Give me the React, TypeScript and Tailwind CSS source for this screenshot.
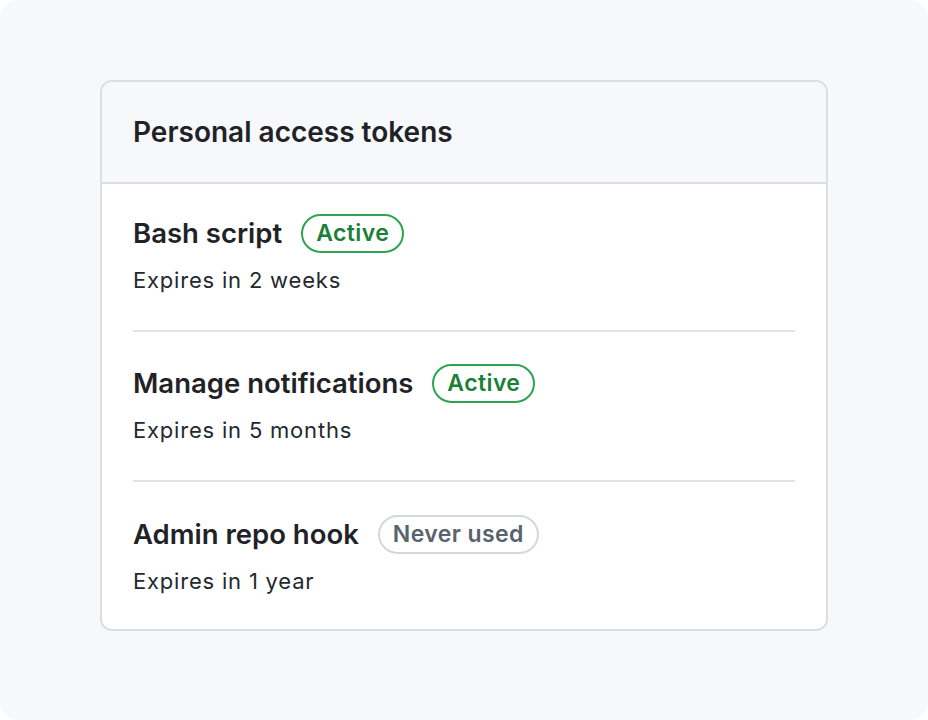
type Token = {
  name: string;
  expires: string;
  status: 'active' | 'unused';
};

const tokens: Token[] = [
  { name: 'Bash script', expires: 'Expires in 2 weeks', status: 'active' },
  { name: 'Manage notifications', expires: 'Expires in 5 months', status: 'active' },
  { name: 'Admin repo hook', expires: 'Expires in 1 year', status: 'unused' },
];

function StatusBadge({ status }: { status: Token['status'] }) {
  if (status === 'active') {
    return (
      <span className="inline-flex h-[39px] items-center rounded-full border-2 border-[#2da44e] px-[13px] text-[23px] font-semibold tracking-[0.4px] text-[#1a7f37]">
        Active
      </span>
    );
  }
  return (
    <span className="inline-flex h-[39px] items-center rounded-full border-2 border-[#d1d9e0] px-[13px] text-[23px] font-semibold tracking-[0.4px] text-[#59636e]">
      Never used
    </span>
  );
}

export default function App() {
  return (
    <div
      className="h-[720px] w-[928px] rounded-[18px] bg-[#f6f8fa] pt-[80px]"
      style={{ fontFamily: 'Inter, "Noto Sans", sans-serif' }}
    >
      <div className="mx-auto w-[728px] overflow-hidden rounded-[12px] border-2 border-[#dadfe5] bg-white text-[#1f2328]">
        <div className="flex h-[102px] items-center border-b-2 border-[#dadfe5] bg-[#f6f8fa] px-[31px]">
          <h2 className="text-[28px] font-semibold">Personal access tokens</h2>
        </div>
        <ul className="px-[31px]">
          {tokens.map((token, i) => (
            <li
              key={token.name}
              className={
                i === 0
                  ? 'pb-[36px] pt-[30px]'
                  : i === tokens.length - 1
                    ? 'border-t-2 border-[#dfe3e8] pb-[34px] pt-[33px]'
                    : 'border-t-2 border-[#dfe3e8] pb-[36px] pt-[32px]'
              }
            >
              <div className="flex h-[39px] items-center gap-[19px]">
                <span className="text-[27.5px] font-semibold">{token.name}</span>
                <StatusBadge status={token.status} />
              </div>
              <div className="mt-[13px] text-[22px] leading-[28px] tracking-[0.8px] text-[#24292f]">
                {token.expires}
              </div>
            </li>
          ))}
        </ul>
      </div>
    </div>
  );
}
